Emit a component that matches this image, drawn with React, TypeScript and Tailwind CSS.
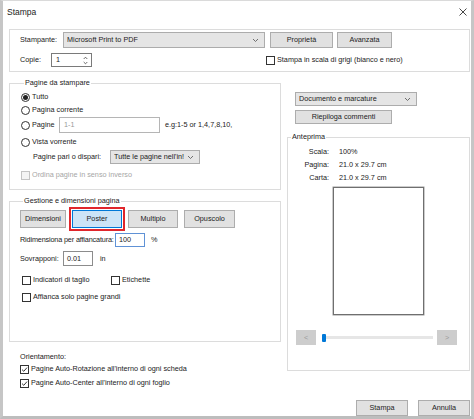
import React from "react";

function Chevron() {
  return (
    <svg width="7" height="5" viewBox="0 0 7 5" className="shrink-0">
      <path d="M1 1 L3.5 3.5 L6 1" fill="none" stroke="#606060" strokeWidth="0.9" />
    </svg>
  );
}

function Btn({ label, className = "" }: { label: string; className?: string }) {
  return (
    <div
      className={`flex items-center justify-center border border-[#adadad] bg-[#e1e1e1] ${className}`}
    >
      {label}
    </div>
  );
}

function Select({ label, className = "" }: { label: string; className?: string }) {
  return (
    <div
      className={`flex items-center justify-between border border-[#acacac] bg-[#e5e5e5] pl-[3px] pr-[5px] ${className}`}
    >
      <span className="truncate">{label}</span>
      <Chevron />
    </div>
  );
}

function Radio({ checked = false }: { checked?: boolean }) {
  return (
    <span className="flex h-[9px] w-[9px] shrink-0 items-center justify-center rounded-full border border-[#333]">
      {checked && <span className="h-[5px] w-[5px] rounded-full bg-[#222]" />}
    </span>
  );
}

function Check({ checked = false, disabled = false }: { checked?: boolean; disabled?: boolean }) {
  return (
    <span
      className={`flex h-[9px] w-[9px] shrink-0 items-center justify-center border ${
        disabled ? "border-[#c4c4c4] bg-[#f4f4f4]" : "border-[#333] bg-white"
      }`}
    >
      {checked && (
        <svg width="7" height="7" viewBox="0 0 7 7">
          <path d="M1 3.6 L2.8 5.3 L6 1.6" fill="none" stroke="#222" strokeWidth="0.9" />
        </svg>
      )}
    </span>
  );
}

function Option({
  control,
  label,
  className = "",
  muted = false,
}: {
  control: React.ReactNode;
  label: string;
  className?: string;
  muted?: boolean;
}) {
  return (
    <div className={`flex items-center gap-[2px] ${muted ? "text-[#a6a6a6]" : ""} ${className}`}>
      {control}
      <span className="whitespace-nowrap">{label}</span>
    </div>
  );
}

function Group({
  title,
  className = "",
  children,
}: {
  title: string;
  className?: string;
  children: React.ReactNode;
}) {
  return (
    <fieldset className={`border border-[#dcdcdc] ${className}`}>
      <legend className="ml-[3px] px-[1px] leading-[10px]">{title}</legend>
      {children}
    </fieldset>
  );
}

export default function App() {
  return (
    <div className="flex h-[419px] w-[474px] flex-col border-x-[3px] border-b-[3px] border-t border-x-[#c6c6c6] border-b-[#bdbdbd] border-t-[#dadada] bg-white font-[family-name:'Liberation_Sans',Arial,sans-serif] text-[7.25px] leading-[10px] text-[#222]">
      {/* title bar */}
      <div className="flex h-[21px] items-center justify-between pl-[4px] pr-[4px]">
        <span className="text-[8.5px]">Stampa</span>
        <svg width="8" height="8" viewBox="0 0 8 8">
          <path d="M0.5 0.5 L7.5 7.5 M7.5 0.5 L0.5 7.5" stroke="#333" strokeWidth="0.9" />
        </svg>
      </div>

      {/* printer */}
      <div className="mr-[1px] ml-[6px] mt-[7px] flex h-[43px] flex-col border border-[#dcdcdc] pl-[10px] pt-[2px]">
        <div className="flex h-[16px] items-center">
          <span className="w-[43px]">Stampante:</span>
          <Select label="Microsoft Print to PDF" className="h-[16px] w-[202px]" />
          <Btn label="Proprietà" className="ml-[5px] h-[16px] w-[63px]" />
          <Btn label="Avanzata" className="ml-[4px] h-[16px] w-[55px]" />
        </div>
        <div className="mt-[5px] flex h-[14px] items-center">
          <span className="w-[31px]">Copie:</span>
          <div className="flex h-[14px] w-[41px] items-center justify-between border border-[#7a7a7a] pl-[4px] pr-[3px]">
            <span>1</span>
            <svg width="5" height="9" viewBox="0 0 5 9">
              <path d="M0.7 3 L2.5 1.2 L4.3 3 M0.7 6 L2.5 7.8 L4.3 6" fill="none" stroke="#444" strokeWidth="0.8" />
            </svg>
          </div>
          <Option
            control={<Check />}
            label="Stampa in scala di grigi (bianco e nero)"
            className="ml-[174px]"
          />
        </div>
      </div>

      <div className="flex flex-1">
        {/* left column */}
        <div className="ml-[6px] flex w-[272px] flex-col">
          <Group title="Pagine da stampare" className="mt-[6px] pb-[8px] pl-[11px] pt-[3px]">
            <Option control={<Radio checked />} label="Tutto" className="h-[12px]" />
            <Option control={<Radio />} label="Pagina corrente" className="mt-[1px] h-[12px]" />
            <div className="mt-[1px] flex h-[16px] items-center">
              <Option control={<Radio />} label="Pagine" className="w-[38px]" />
              <div className="flex h-[16px] w-[101px] items-center border border-[#b5b5b5] pl-[4px] text-[#9a9a9a]">
                1-1
              </div>
              <span className="ml-[5px] whitespace-nowrap">e.g:1-5 or 1,4,7,8,10,</span>
            </div>
            <Option control={<Radio />} label="Vista vorrente" className="mt-[3px] h-[12px]" />
            <div className="mt-[2px] flex h-[14px] items-center pl-[12px]">
              <span className="w-[77px]">Pagine pari o dispari:</span>
              <Select label="Tutte le pagine nell'in!" className="h-[14px] w-[90px]" />
            </div>
            <Option
              control={<Check disabled />}
              label="Ordina pagine in senso inverso"
              className="mt-[5px] h-[12px]"
              muted
            />
          </Group>

          <Group title="Gestione e dimensioni pagina" className="mt-[6px] pb-[38px] pl-[10px] pt-[4px]">
            <div className="flex h-[18px] gap-[6px]">
              <Btn label="Dimensioni" className="h-[18px] w-[46px]" />
              <div className="flex h-[18px] w-[50px] items-center justify-center border border-[#0078d7] bg-[#cce4f7] outline-2 outline-offset-[1px] outline-[#e0262c]">
                Poster
              </div>
              <Btn label="Multiplo" className="h-[18px] w-[50px]" />
              <Btn label="Opuscolo" className="h-[18px] w-[51px]" />
            </div>
            <div className="mt-[5px] flex h-[14px] items-center">
              <span className="w-[95px] whitespace-nowrap tracking-[-0.15px]">Ridimensiona per affiancatura:</span>
              <div className="flex h-[14px] w-[30px] items-center border border-[#5f92d6] pl-[3px]">100</div>
              <span className="ml-[6px]">%</span>
            </div>
            <div className="mt-[4px] flex h-[15px] items-center">
              <span className="w-[43px]">Sovrapponi:</span>
              <div className="flex h-[15px] w-[30px] items-center border border-[#8c8c8c] pl-[3px]">0.01</div>
              <span className="ml-[7px]">in</span>
            </div>
            <div className="mt-[8px] flex h-[12px] items-center pl-[2px]">
              <Option control={<Check />} label="Indicatori di taglio" className="w-[89px]" />
              <Option control={<Check />} label="Etichette" />
            </div>
            <Option
              control={<Check />}
              label="Affianca solo pagine grandi"
              className="mt-[5px] h-[12px] pl-[2px]"
            />
          </Group>

          <div className="mt-[9px] flex h-[12px] items-center pl-[11px]">Orientamento:</div>
          <Option
            control={<Check checked />}
            label="Pagine Auto-Rotazione all'interno di ogni scheda"
            className="h-[12px] pl-[11px]"
          />
          <Option
            control={<Check checked />}
            label="Pagine Auto-Center all'interno di ogni foglio"
            className="mt-[2px] h-[12px] pl-[11px]"
          />
        </div>

        {/* right column */}
        <div className="ml-[6px] flex w-[183px] flex-col">
          <Select label="Documento e marcature" className="ml-[8px] mt-[20px] h-[14px] w-[122px]" />
          <Btn label="Riepiloga commenti" className="ml-[8px] mt-[4px] h-[14px] w-[97px]" />

          <Group title="Anteprima" className="mt-[8px] pb-[25px] pt-[3px]">
            {[
              ["Scala:", "100%"],
              ["Pagina:", "21.0 x 29.7 cm"],
              ["Carta:", "21.0 x 29.7 cm"],
            ].map(([k, v]) => (
              <div key={k} className="flex h-[13px] items-center gap-[10px]">
                <span className="w-[41px] text-right">{k}</span>
                <span>{v}</span>
              </div>
            ))}
            <div className="mx-auto mt-[3px] h-[128px] w-[91px] border border-[#6f6f6f] bg-white shadow-[0_0_0_0.5px_#9a9a9a]" />
            <div className="mt-[15px] flex h-[15px] items-center pl-[8px]">
              <div className="flex h-[15px] w-[20px] items-center justify-center bg-[#cdcdcd] text-[#9b9b9b]">
                &lt;
              </div>
              <div className="ml-[6px] flex h-[3px] w-[111px] items-center bg-[#e6e6e6]">
                <span className="h-[8px] w-[4px] rounded-[1px] bg-[#0078d7]" />
              </div>
              <div className="ml-[4px] flex h-[15px] w-[20px] items-center justify-center bg-[#cdcdcd] text-[#9b9b9b]">
                &gt;
              </div>
            </div>
          </Group>

          <div className="mt-[29px] flex justify-end gap-[10px]">
            <Btn label="Stampa" className="h-[16px] w-[52px] border-[#0078d7]" />
            <Btn label="Annulla" className="h-[16px] w-[52px]" />
          </div>
        </div>
      </div>
    </div>
  );
}
